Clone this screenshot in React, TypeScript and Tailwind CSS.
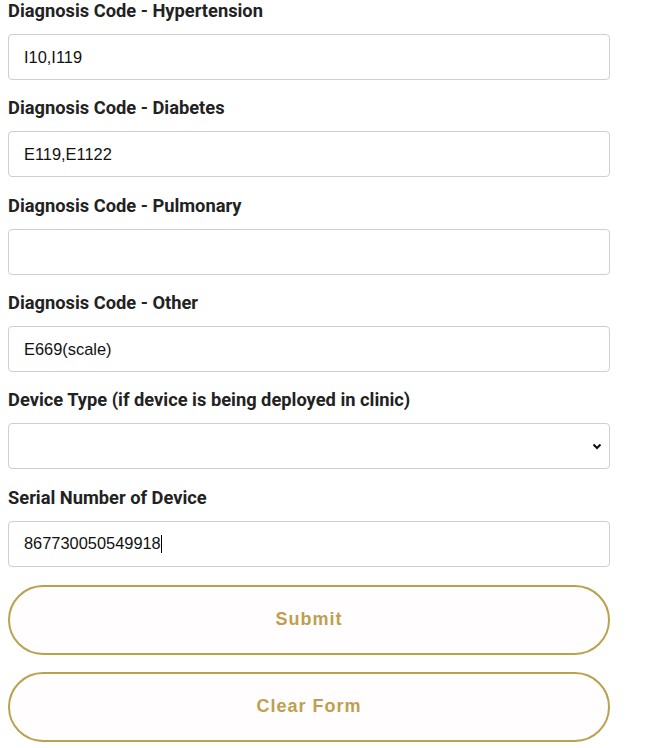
import React from "react";

const labelCls =
  "block h-[22px] leading-[22px] text-[18.3px] font-bold text-[#222222] font-['Roboto',sans-serif] mb-[12px]";
const boxCls =
  "flex items-center h-[46px] w-[602px] rounded-[4px] border border-[#cfcfcf] bg-white pl-[15px] text-[16.4px] text-[#111111] font-['Liberation_Sans',Arial,sans-serif]";

function Field({ label, value }: { label: string; value: string }) {
  return (
    <div className="mb-[17.35px]">
      <div className={labelCls}>{label}</div>
      <div className={boxCls}>
        <span>{value}</span>
      </div>
    </div>
  );
}

export default function App() {
  return (
    <div className="bg-white w-[652px] h-[748px] pl-[8px] overflow-hidden">
      <Field label="Diagnosis Code - Hypertension" value="I10,I119" />
      <Field label="Diagnosis Code - Diabetes" value="E119,E1122" />
      <Field label="Diagnosis Code - Pulmonary" value="" />
      <Field label="Diagnosis Code - Other" value="E669(scale)" />
      <div className="mb-[17.35px]">
        <div className={labelCls}>Device Type (if device is being deployed in clinic)</div>
        <div className={boxCls + " justify-end pr-[7px]"}>
          <svg width="10" height="7" viewBox="0 0 10 7">
            <path d="M1.5 1.5 L5 5 L8.5 1.5" fill="none" stroke="#111" strokeWidth="2" />
          </svg>
        </div>
      </div>
      <div className="mb-[18px]">
        <div className={labelCls}>Serial Number of Device</div>
        <div className={boxCls}>
          <span>867730050549918</span>
          <span className="inline-block w-px h-[18px] bg-black" />
        </div>
      </div>
      <div className="flex flex-col gap-[17px]">
        <div className="flex items-center justify-center h-[70px] w-[602px] rounded-full border-2 border-[#b9a24e] bg-[#fffdfe] text-[18px] font-bold tracking-[1px] text-[#bf9f4f] font-['Liberation_Sans',Arial,sans-serif]">
          Submit
        </div>
        <div className="flex items-center justify-center h-[70px] w-[602px] rounded-full border-2 border-[#b9a24e] bg-[#fffdfe] text-[18px] font-bold tracking-[1px] text-[#bf9f4f] font-['Liberation_Sans',Arial,sans-serif]">
          Clear Form
        </div>
      </div>
    </div>
  );
}
